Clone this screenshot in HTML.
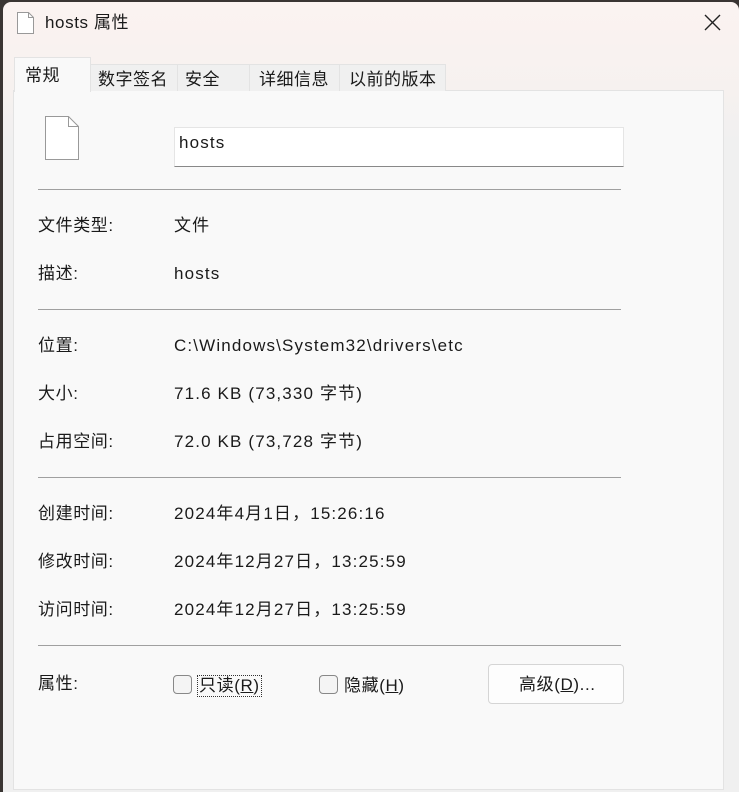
<!DOCTYPE html>
<html><head><meta charset="utf-8"><style>
*{margin:0;padding:0;box-sizing:border-box}
body{width:739px;height:782px;overflow:hidden;background:#3a3533;font-family:"Liberation Sans","Noto Sans CJK SC",sans-serif;color:#1a1a1a;position:relative}
.win{position:absolute;left:3px;top:2px;width:736px;height:790px;border-radius:8px 8px 0 0;background:linear-gradient(#fbf3f1 0,#f6f1ef 90px,#f0f0f0 140px)}
.abs{position:absolute;white-space:nowrap}
.panel{position:absolute;left:13px;top:90px;width:711px;height:700px;background:#f9f9f9;border:1px solid #e3e3e3}
.tab{position:absolute;top:64px;height:27px;font-size:17px;line-height:29px;padding-left:7px;background:#f0f0f0;border:1px solid #e3e3e3;border-bottom:none;letter-spacing:0.5px}
.sel{top:57px;height:35px;background:#f9f9f9;line-height:36px;padding-left:10px;z-index:2}
.t{position:absolute;font-size:17px;white-space:nowrap;line-height:20px;letter-spacing:0.6px}
.v{letter-spacing:1.15px}
.hr{position:absolute;left:38px;width:583px;height:1px;background:#a0a0a0}
.cb{position:absolute;width:19px;height:19px;border:1px solid #888;border-radius:4px;background:#f4f4f4}
</style></head><body>
<div class="win"></div>
<svg class="abs" style="left:16px;top:11px" width="20" height="24" viewBox="0 0 20 24"><path d="M1.5 1.5h11l5 5v16h-16z" fill="#fff" stroke="#999"/><path d="M12.5 1.5v5h5" fill="none" stroke="#999"/></svg>
<div class="t" style="left:45px;top:13px">hosts 属性</div>
<svg class="abs" style="left:704px;top:14px" width="17" height="17"><path d="M1 1L16 16M16 1L1 16" stroke="#222" stroke-width="1.4"/></svg>
<div class="panel"></div>
<div class="tab sel" style="left:14px;width:77px">常规</div>
<div class="tab" style="left:90px;width:88px">数字签名</div>
<div class="tab" style="left:177px;width:73px">安全</div>
<div class="tab" style="left:249px;width:91px;padding-left:9px">详细信息</div>
<div class="tab" style="left:339px;width:107px;padding-left:9px">以前的版本</div>
<svg class="abs" style="left:44px;top:115px" width="36" height="46" viewBox="0 0 36 46"><path d="M1.5 1.5h23l10 10v33h-33z" fill="#fff" stroke="#999"/><path d="M24.5 1.5v10h10" fill="none" stroke="#999"/></svg>
<div class="abs" style="left:174px;top:127px;width:450px;height:40px;background:#fff;border:1px solid #e5e5e5;border-bottom:1px solid #888"></div>
<div class="t v" style="left:179px;top:133px">hosts</div>
<div class="hr" style="top:189px"></div>
<div class="t" style="left:38px;top:216px">文件类型:</div><div class="t v" style="left:174px;top:216px">文件</div>
<div class="t" style="left:38px;top:264px">描述:</div><div class="t v" style="left:174px;top:264px">hosts</div>
<div class="hr" style="top:309px"></div>
<div class="t" style="left:38px;top:336px">位置:</div><div class="t v" style="left:174px;top:336px">C:\Windows\System32\drivers\etc</div>
<div class="t" style="left:38px;top:384px">大小:</div><div class="t v" style="left:174px;top:384px">71.6 KB (73,330 字节)</div>
<div class="t" style="left:38px;top:432px">占用空间:</div><div class="t v" style="left:174px;top:432px">72.0 KB (73,728 字节)</div>
<div class="hr" style="top:477px"></div>
<div class="t" style="left:38px;top:504px">创建时间:</div><div class="t v" style="left:174px;top:504px">2024年4月1日，15:26:16</div>
<div class="t" style="left:38px;top:552px">修改时间:</div><div class="t v" style="left:174px;top:552px">2024年12月27日，13:25:59</div>
<div class="t" style="left:38px;top:600px">访问时间:</div><div class="t v" style="left:174px;top:600px">2024年12月27日，13:25:59</div>
<div class="hr" style="top:645px"></div>
<div class="t" style="left:38px;top:674px">属性:</div>
<div class="cb" style="left:173px;top:675px"></div>
<div class="t" style="left:197px;top:675px;border:1px dotted #333;padding:0 1px">只读(<u>R</u>)</div>
<div class="cb" style="left:319px;top:675px"></div>
<div class="t" style="left:344px;top:676px">隐藏(<u>H</u>)</div>
<div class="abs" style="left:488px;top:664px;width:136px;height:40px;background:#fdfdfd;border:1px solid #d5d5d5;border-radius:4px"></div>
<div class="t" style="left:519px;top:675px">高级(<u>D</u>)...</div>
</body></html>
